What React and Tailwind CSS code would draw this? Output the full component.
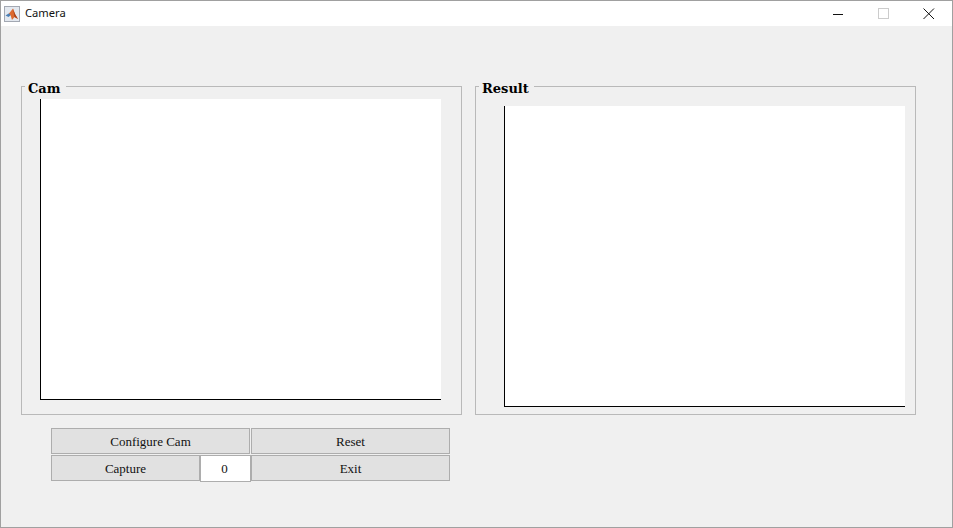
export default function App() {
  const serif = "font-['Liberation_Serif','DejaVu_Serif',serif]";
  const legend = "absolute left-[3px] top-[-7px] bg-[#f0f0f0] px-[3px] pr-[5px] text-[13px] leading-[18px] font-bold text-black font-['DejaVu_Serif',serif]";
  return (
    <div className="w-[953px] h-[528px] border border-[#a0a0a0] bg-[#f0f0f0] flex flex-col overflow-hidden">
      <div className="h-[25px] bg-white flex items-center shrink-0">
        <div className="ml-[3px] w-[16px] h-[16px] border border-[#a3a8b2] bg-[#e3e8ef] flex items-center justify-center">
          <svg width="14" height="14" viewBox="0 0 14 14">
            <path d="M0.5 8.5 L4.5 6 L6 8 L3.5 10 Z" fill="#4a7fb5" />
            <path d="M4 6.5 L8 1.5 L10 7 L13 12 L9.5 10 L7 13 L5.5 8 Z" fill="#dd6a30" />
            <path d="M8 1.5 L10 7 L13 12 L9.5 10 Z" fill="#a8431c" />
          </svg>
        </div>
        <span className="ml-[5px] text-[11.2px] text-[#111] font-['Noto_Sans',sans-serif]">Camera</span>
        <div className="ml-auto flex items-center">
          <svg width="12" height="12" viewBox="0 0 12 12" className="mr-[33px]"><path d="M0 6.5H10" stroke="#111" strokeWidth="1" /></svg>
          <svg width="12" height="12" viewBox="0 0 12 12" className="mr-[33px]"><rect x="0.5" y="0.5" width="10" height="10" fill="none" stroke="#cccccc" /></svg>
          <svg width="12" height="12" viewBox="0 0 12 12" className="mr-[17px]"><path d="M0.5 0.5L11 11M11 0.5L0.5 11" stroke="#111" strokeWidth="1" /></svg>
        </div>
      </div>

      <div className="flex-1 pl-[20px] pt-[60px]">
        <div className="flex gap-[13px]">
          <div className={`relative w-[441px] h-[329px] border border-[#b9b9b9] pl-[18px] pt-[12px] ${serif}`}>
            <span className={legend}>Cam</span>
            <div className="w-[401px] h-[301px] bg-white border-l border-b border-black" />
          </div>
          <div className={`relative w-[441px] h-[329px] border border-[#b9b9b9] pl-[28px] pt-[19px] ${serif}`}>
            <span className={legend}>Result</span>
            <div className="w-[401px] h-[301px] bg-white border-l border-b border-black" />
          </div>
        </div>

        <div className={`ml-[30px] mt-[13px] flex flex-col gap-[1px] text-[13px] text-[#111] ${serif}`}>
          <div className="flex gap-[1px]">
            <button className="w-[199px] h-[26px] pt-[1px] bg-[#e1e1e1] border border-[#adadad]">Configure Cam</button>
            <button className="w-[199px] h-[26px] pt-[1px] bg-[#e1e1e1] border border-[#adadad]">Reset</button>
          </div>
          <div className="flex">
            <button className="w-[149px] h-[26px] pt-[1px] bg-[#e1e1e1] border border-[#adadad]">Capture</button>
            <div className="w-[51px] h-[27px] bg-white border border-[#adadad] flex items-center justify-center pr-[2px]">0</div>
            <button className="w-[199px] h-[26px] pt-[1px] bg-[#e1e1e1] border border-[#adadad]">Exit</button>
          </div>
        </div>
      </div>
    </div>
  );
}
